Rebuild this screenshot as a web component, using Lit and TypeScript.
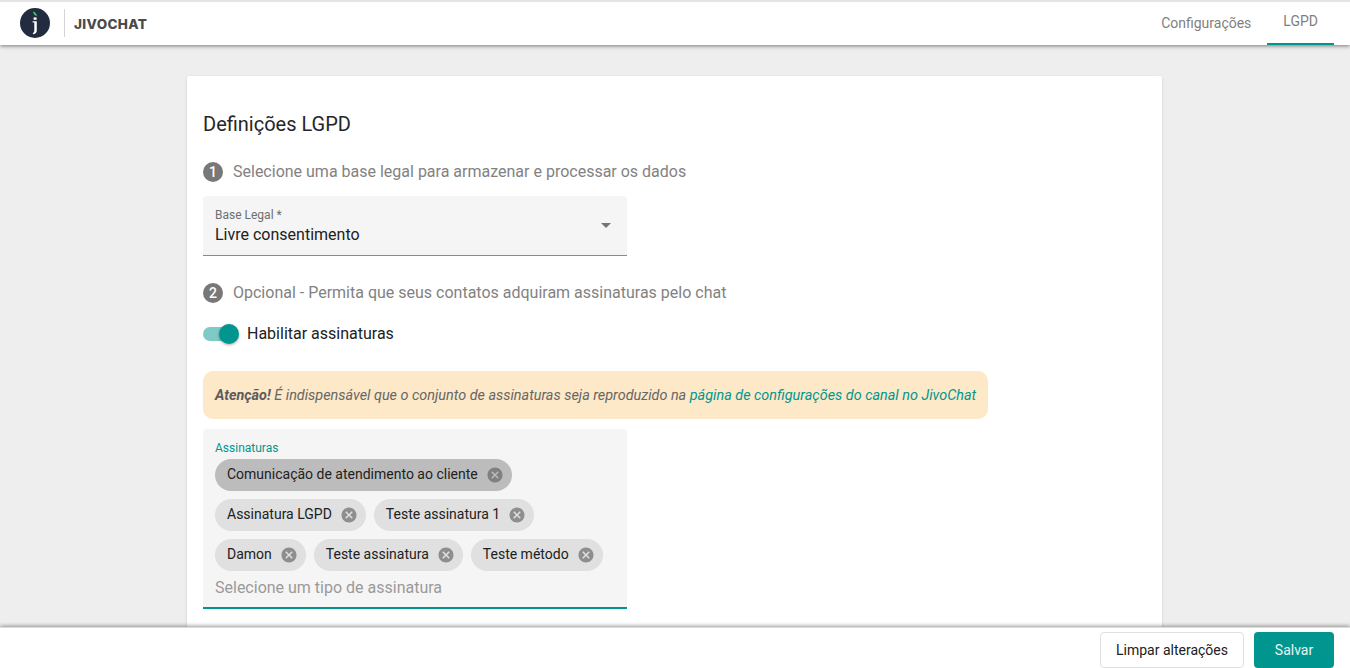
import { LitElement, html, css, svg } from "lit";
import { customElement } from "lit/decorators.js";

const cancel = svg`<path d="M12 2C6.47 2 2 6.47 2 12s4.47 10 10 10 10-4.47 10-10S17.53 2 12 2zm5 13.59L15.59 17 12 13.41 8.41 17 7 15.59 10.59 12 7 8.41 8.41 7 12 10.59 15.59 7 17 8.41 13.41 12 17 15.59z"/>`;

@customElement("app-root")
export class AppRoot extends LitElement {
  static styles = css`
    :host { display: flex; flex-direction: column; height: 668px; overflow: hidden; background: #eeeeee; font-family: Roboto, sans-serif; color: #212121; }
    * { box-sizing: border-box; }
    .top { flex: none; height: 45px; background: #fff; border-top: 2px solid #e4e4e4; display: flex; align-items: center; padding-left: 20px; box-shadow: 0 1px 4px rgba(0,0,0,.5); position: relative; z-index: 2; }
    .logo { width: 30px; height: 30px; flex: none; display: block; margin-top: -1px; }
    .sep { width: 1px; height: 28px; background: #d4d4d4; margin-left: 14px; margin-top: -1px; }
    .brand { margin-left: 9px; font-family: Inter, sans-serif; font-weight: 800; font-size: 13.5px; color: #4a4a4a; letter-spacing: .35px; margin-top: 1px; }
    .tabs { margin-left: auto; display: flex; margin-right: 16px; height: 100%; }
    .tab { font-size: 14px; color: #7f7f7f; display: flex; align-items: center; padding: 0 16px 2px; height: 43px; }
    .tab.active { border-bottom: 2px solid #00968f; padding-bottom: 3px; }
    main { flex: 1; min-height: 0; overflow: hidden; padding: 31px 188px 0 187px; }
    .card { background: #fff; box-shadow: 0 1px 3px rgba(0,0,0,.14); border-radius: 2px; padding: 35px 16px 0; height: 600px; }
    h1 { margin: 0; font-size: 20px; font-weight: 400; line-height: 26px; color: #262626; }
    .step { display: flex; align-items: center; gap: 10px; font-size: 16px; color: #828282; line-height: 20px; }
    .s1 { margin-top: 25px; }
    .s2 { margin-top: 27px; }
    .num { width: 20px; height: 20px; border-radius: 50%; background: #787878; color: #fff; font-size: 14px; font-weight: 500; display: flex; align-items: center; justify-content: center; flex: none; }
    .select { margin-top: 14px; width: 424px; height: 60px; background: #f5f5f5; border-radius: 4px 4px 0 0; border-bottom: 1px solid #8a8a8a; padding: 12px 12px 0; position: relative; }
    .flabel { font-size: 12px; line-height: 14px; color: #6f6f6f; }
    .fvalue { font-size: 16px; line-height: 20px; margin-top: 3px; color: #212121; }
    .arrow { position: absolute; right: 16px; top: 27px; width: 0; height: 0; border-left: 5px solid transparent; border-right: 5px solid transparent; border-top: 5px solid #757575; }
    .toggle { margin-top: 21px; display: flex; align-items: center; gap: 8px; font-size: 16px; line-height: 20px; color: #212121; }
    .switch { width: 36px; height: 20px; position: relative; flex: none; }
    .track { position: absolute; left: 0; top: 3px; width: 32px; height: 14px; border-radius: 7px; background: #7fcac6; }
    .thumb { position: absolute; right: 0; top: 0; width: 20px; height: 20px; border-radius: 50%; background: #00968f; box-shadow: 0 1px 3px rgba(0,0,0,.35); }
    .alert { margin-top: 27px; width: 785px; height: 48px; background: #fde8c8; border-radius: 10px; padding: 0 12px; display: flex; align-items: center; font-size: 14.4px; font-style: italic; color: #666; white-space: pre; }
    .alert b { font-weight: 700; color: #5c5c5c; }
    .alert a { color: #00968f; }
    .subs { margin-top: 10px; width: 424px; height: 180px; background: #f5f5f5; border-radius: 4px 4px 0 0; border-bottom: 2px solid #00968f; padding: 12px 12px 0; }
    .subs .flabel { color: #00968f; }
    .chips { display: flex; flex-direction: column; gap: 8px; margin-top: 4px; }
    .row { display: flex; gap: 8px; }
    .chip { height: 32px; border-radius: 16px; background: #e0e0e0; display: flex; align-items: center; padding-left: 12px; padding-right: 8px; font-size: 14px; color: #212121; }
    .chip.focus { background: #bcbcbc; }
    .chip span { padding-bottom: 2px; }
    .chip svg { width: 18px; height: 18px; margin-left: 8px; fill: #8e8e8e; flex: none; }
    .chip.focus svg { fill: #808080; }
    .ph { font-size: 16px; line-height: 20px; color: #9a9a9a; margin-top: 7px; }
    footer { flex: none; height: 41px; background: #fff; border-top: 1px solid #dcdcdc; box-shadow: 0 -1px 4px rgba(0,0,0,.4); position: relative; z-index: 2; display: flex; justify-content: flex-end; align-items: flex-start; gap: 10px; padding: 4px 16px 0 0; }
    .btn { height: 36px; border-radius: 4px; font-family: inherit; font-size: 14px; display: flex; align-items: center; justify-content: center; }
    .ghost { width: 144px; background: #fff; border: 1px solid #e0e0e0; color: #212121; }
    .solid { width: 80px; background: #00968f; border: 0; color: #e6f4f3; }
  `;

  render() {
    const chip = (t: string, focus = false) => html`<div class="chip ${focus ? "focus" : ""}"><span>${t}</span><svg viewBox="0 0 24 24">${cancel}</svg></div>`;
    return html`
      <header class="top">
        <svg class="logo" viewBox="0 0 30 30">
          <circle cx="15" cy="15" r="15" fill="#232b3e"/>
          <path d="M13 3.6c2 .5 3.6 2 4 4.6-2.2-.3-3.7-2-4-4.6z" fill="#3fc06a"/>
          <rect x="13.6" y="9.4" width="3" height="2.4" fill="#fff"/>
          <path d="M12.6 13.2h4.2v9.2c0 2-1 3.2-3.6 3.8l-.5-1.2c1.2-.4 1.6-1.2 1.6-2.6v-7.9h-1.7z" fill="#fff"/>
        </svg>
        <div class="sep"></div>
        <div class="brand">JIVOCHAT</div>
        <nav class="tabs">
          <div class="tab">Configurações</div>
          <div class="tab active">LGPD</div>
        </nav>
      </header>
      <main>
        <section class="card">
          <h1>Definições LGPD</h1>
          <div class="step s1"><span class="num">1</span>Selecione uma base legal para armazenar e processar os dados</div>
          <div class="select">
            <div class="flabel">Base Legal *</div>
            <div class="fvalue">Livre consentimento</div>
            <div class="arrow"></div>
          </div>
          <div class="step s2"><span class="num">2</span>Opcional - Permita que seus contatos adquiram assinaturas pelo chat</div>
          <div class="toggle"><div class="switch"><div class="track"></div><div class="thumb"></div></div>Habilitar assinaturas</div>
          <div class="alert"><b>Atenção!</b> É indispensável que o conjunto de assinaturas seja reproduzido na <a>página de configurações do canal no JivoChat</a></div>
          <div class="subs">
            <div class="flabel">Assinaturas</div>
            <div class="chips">
              <div class="row">${chip("Comunicação de atendimento ao cliente", true)}</div>
              <div class="row">${chip("Assinatura LGPD")}${chip("Teste assinatura 1")}</div>
              <div class="row">${chip("Damon")}${chip("Teste assinatura")}${chip("Teste método")}</div>
            </div>
            <div class="ph">Selecione um tipo de assinatura</div>
          </div>
        </section>
      </main>
      <footer>
        <div class="btn ghost">Limpar alterações</div>
        <div class="btn solid">Salvar</div>
      </footer>
    `;
  }
}
